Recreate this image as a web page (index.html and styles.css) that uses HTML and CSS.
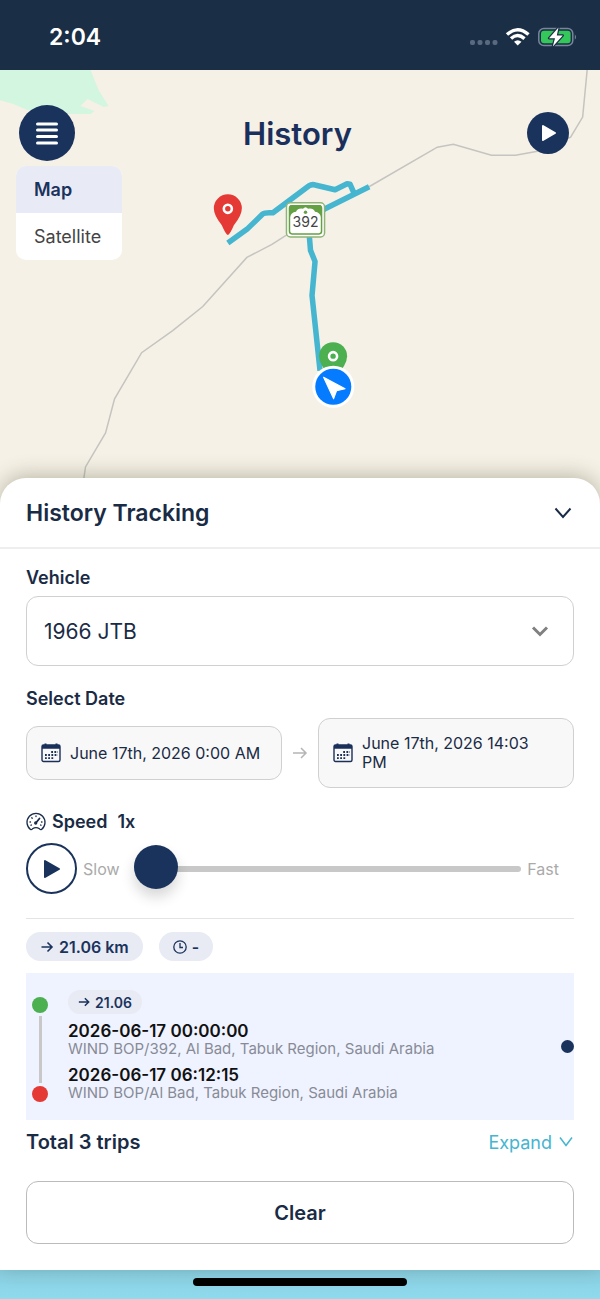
FILE: index.html
```html
<!DOCTYPE html>
<html lang="en">
<head>
<meta charset="utf-8">
<meta name="viewport" content="width=device-width, initial-scale=1">
<title>History</title>
<link rel="stylesheet" href="styles.css">
</head>
<body>
<div class="status">
  <span class="clock">2:04</span>
  <svg class="status-icons" width="108" height="22" viewBox="470 26 108 22" aria-hidden="true">
    <g fill="#596a80"><rect x="470" y="40" width="5" height="5" rx="2"/><rect x="477.500" y="40" width="5" height="5" rx="2"/><rect x="485" y="40" width="5" height="5" rx="2"/><rect x="492.500" y="40" width="5" height="5" rx="2"/></g>
    <g fill="none" stroke="#fff" stroke-width="3.400"><path d="M507 34.600Q517.500 24.800 528.500 34.600"/><path d="M511 38.600Q517.500 32.600 524.500 38.600"/></g>
    <path d="M514 41.800Q517.700 38.800 521.500 41.800L517.700 45.600Z" fill="#fff"/>
    <rect x="538.800" y="28.500" width="34" height="17" rx="5" fill="none" stroke="#77869a" stroke-width="1.500"/>
    <rect x="541" y="30.700" width="29.600" height="12.600" rx="3" fill="#34c759"/>
    <path d="M574.800 34.200q2.400 2.800 0 5.600z" fill="#77869a"/>
    <path d="M558.500 27.500L549 38.200H555L552.800 46.500L562.800 35.500H556.800Z" fill="#fff" stroke="#1a2e45" stroke-width="2.400" paint-order="stroke" stroke-linejoin="round"/>
  </svg>
</div>

<main class="screen">
  <section class="map" aria-label="Route map">
    <svg class="map-canvas" viewBox="0 70 600 433" preserveAspectRatio="xMidYMin slice" role="img" aria-label="Trip route near road 392">
      <path d="M0 70H91L99 90L109 106L104 107L88 99L81 106L95 111L91 114H72L28 110L14 104L0 100Z" fill="#d3f6e0"/>
      <path d="M586.500 70L582 117L570 137L537 151L515 155H491L453 144L437 147L368 187L325 208L300 226L272 244L247 257L203 306L173 330L142 352L115 398L106 432L86 466L84 480" fill="none" stroke="#c5c4c0" stroke-width="1.500"/>
      <g fill="none" stroke="#45b5d0" stroke-width="5.500" stroke-linejoin="round">
        <path d="M228 242.500L247 229L263 213.500Q265 212 273 212.500L309 185.500Q312 183.500 316 185L335 189.500L347 183.500L350 184L354 193"/>
        <path d="M369 186.500L325 208.500L308 220L310.500 250L315 261L312 295L320 370"/>
      </g>
      <rect x="286.500" y="202.500" width="38" height="34" rx="4" fill="#fff" stroke="#8fb477" stroke-width="1.500"/>
      <rect x="289.500" y="205.500" width="32" height="28" rx="2.500" fill="#fff" stroke="#66a044" stroke-width="1.500"/>
      <path d="M290 205H321V217Q320 212 315 211.500Q313 207.500 308 208.500Q305.500 205.500 303 208.500Q298 207.500 296 211.500Q291 212 290 217Z" fill="#66a044"/>
      <circle cx="305.500" cy="212" r="1.700" fill="#66a044"/>
      <text class="road-number" x="305.500" y="227" text-anchor="middle">392</text>
      <path d="M228 234.500Q226 234.500 222 225Q214 215 214 208A14 14 0 0 1 242 208Q242 215 234 225Q230 234.500 228 234.500Z" fill="#e53935"/>
      <circle cx="228" cy="208.500" r="4" fill="none" stroke="#fff" stroke-width="2.600"/>
      <path d="M333 382L322 365Q319 360 319 355.500A14 14 0 0 1 347 355.500Q347 360 344 365Z" fill="#4caf50"/>
      <circle cx="333" cy="355.500" r="4" fill="none" stroke="#fff" stroke-width="2.600"/>
      <circle cx="333.200" cy="386" r="21" fill="#fff"/>
      <circle cx="333.200" cy="386" r="18" fill="#057bff"/>
      <path d="M323.500 376.500L345 388L336.500 390L333.500 398Z" fill="#fff" stroke="#fff" stroke-width="1" stroke-linejoin="round"/>
    </svg>
    <header class="map-bar">
      <button class="round menu" type="button" aria-label="Menu">
        <svg width="24" height="24" viewBox="0 0 24 24" stroke="#fff" stroke-width="3" stroke-linecap="round"><path d="M2.500 3H21.500M2.500 9H21.500M2.500 15.500H21.500M2.500 22H21.500"/></svg>
      </button>
      <h1>History</h1>
      <button class="round play-map" type="button" aria-label="Play">
        <svg width="16" height="18" viewBox="0 0 16 18"><path d="M2 2L14 9L2 16Z" fill="#fff" stroke="#fff" stroke-width="2" stroke-linejoin="round"/></svg>
      </button>
    </header>
    <div class="map-types">
      <button class="type active" type="button">Map</button>
      <button class="type" type="button">Satellite</button>
    </div>
  </section>

  <section class="sheet">
    <header class="sheet-head">
      <h2>History Tracking</h2>
      <button class="plain" type="button" aria-label="Collapse">
        <svg width="22" height="22" viewBox="0 0 22 22" fill="none" stroke="#1a2b4a" stroke-width="2"><path d="M3.500 6.500L11 15L18.500 6.500"/></svg>
      </button>
    </header>
    <div class="sheet-body">
      <label class="label" for="vehicle">Vehicle</label>
      <div class="select-wrap">
        <select id="vehicle"><option>1966 JTB</option></select>
        <svg width="20" height="20" viewBox="0 0 20 20" fill="none" stroke="#808080" stroke-width="3" aria-hidden="true"><path d="M3 6.500L10 13.500L17 6.500"/></svg>
      </div>

      <h3 class="label date-label">Select Date</h3>
      <div class="dates">
        <button class="date" type="button">
          <svg class="calendar" width="20" height="20" viewBox="0 0 20 20"><rect x="1" y="2" width="18" height="16.500" rx="1.500" fill="none" stroke="#1a2f5a" stroke-width="1.400"/><path d="M1 2H19V5.800H1ZM3.500 .500H5.500V3H3.500ZM14.500 .500H16.500V3H14.500Z" fill="#1a2f5a"/><path d="M10.200 9H17M4 12H17M4 15.200H13.500" stroke="#1a2f5a" stroke-width="1.800" stroke-dasharray="1.800 1.400"/></svg>
          <span>June 17th, 2026 0:00 AM</span>
        </button>
        <svg width="16" height="14" viewBox="0 0 16 14" fill="none" stroke="#b5b5b5" stroke-width="1.500" aria-hidden="true"><path d="M1 7H14M9 2L14 7L9 12"/></svg>
        <button class="date" type="button">
          <svg class="calendar" width="20" height="20" viewBox="0 0 20 20"><rect x="1" y="2" width="18" height="16.500" rx="1.500" fill="none" stroke="#1a2f5a" stroke-width="1.400"/><path d="M1 2H19V5.800H1ZM3.500 .500H5.500V3H3.500ZM14.500 .500H16.500V3H14.500Z" fill="#1a2f5a"/><path d="M10.200 9H17M4 12H17M4 15.200H13.500" stroke="#1a2f5a" stroke-width="1.800" stroke-dasharray="1.800 1.400"/></svg>
          <span>June 17th, 2026 14:03 PM</span>
        </button>
      </div>

      <div class="speed-title">
        <svg width="20" height="20" viewBox="0 0 20 20" fill="none" stroke="#1a2b4a" stroke-width="1.300" stroke-linecap="round" aria-hidden="true"><path d="M4.500 17.500A9 9 0 1 1 15.500 17.500Q14.500 18 13.500 16.800Q10 14.500 6.500 16.800Q5.500 18 4.500 17.500Z"/><path d="M9.800 11L13.500 6.500" stroke-width="1.800"/><path d="M10 4V4.500M5.800 5.800L6.200 6.200M4 10H4.500M15.500 10H16M5 13.300L5.300 13M15 13.300L14.700 13"/><circle cx="9.700" cy="11" r="1"/></svg>
        <label for="speed">Speed</label>
        <output for="speed">1x</output>
      </div>
      <div class="speed-row">
        <button class="play-track" type="button" aria-label="Play trip">
          <svg width="18" height="20" viewBox="0 0 18 20"><path d="M2 2L16 10L2 18Z" fill="#1a335c" stroke="#1a335c" stroke-width="2" stroke-linejoin="round"/></svg>
        </button>
        <span>Slow</span>
        <input id="speed" type="range" min="1" max="10" value="1">
        <span>Fast</span>
      </div>

      <div class="totals">
        <span class="pill"><svg width="14" height="14" viewBox="0 0 14 14" fill="none" stroke="#1a335c" stroke-width="1.600"><path d="M1.500 7H12M7.500 2.500L12 7L7.500 11.500"/></svg>21.06 km</span>
        <span class="pill"><svg width="14" height="14" viewBox="0 0 14 14" fill="none" stroke="#1a335c" stroke-width="1.300"><circle cx="7" cy="7" r="6.200"/><path d="M7 3V7.500H10"/></svg>-</span>
      </div>

      <article class="trip">
        <div class="rail"><i class="dot start"></i><i class="line"></i><i class="dot end"></i></div>
        <div class="trip-info">
          <span class="pill small"><svg width="12" height="12" viewBox="0 0 14 14" fill="none" stroke="#1a335c" stroke-width="1.700"><path d="M1 7H12.500M8 2.500L12.500 7L8 11.500"/></svg>21.06</span>
          <div class="stop"><time datetime="2026-06-17T00:00:00">2026-06-17 00:00:00</time><p>WIND BOP/392, Al Bad, Tabuk Region, Saudi Arabia</p></div>
          <div class="stop"><time datetime="2026-06-17T06:12:15">2026-06-17 06:12:15</time><p>WIND BOP/Al Bad, Tabuk Region, Saudi Arabia</p></div>
        </div>
        <i class="marker"></i>
      </article>

      <div class="summary">
        <strong>Total 3 trips</strong>
        <button class="plain expand" type="button">Expand
          <svg width="16" height="16" viewBox="0 0 16 16" fill="none" stroke="#45b5d0" stroke-width="1.500"><path d="M2 3.500L8 11.500L14 3.500"/></svg>
        </button>
      </div>
      <button class="clear" type="button">Clear</button>
    </div>
  </section>
</main>
<footer class="home"><i class="home-bar"></i></footer>
</body>
</html>
```

FILE: styles.css
```css
* { box-sizing: border-box; }
body {
  margin: 0;
  min-height: 100vh;
  display: flex;
  flex-direction: column;
  font-family: Inter, "Liberation Sans", sans-serif;
  font-size: 16px;
  color: #1a2b45;
  background: #fff;
}
h1, h2, h3, p { margin: 0; }
button, select { font: inherit; color: inherit; cursor: pointer; }
button { padding: 0; border: 0; background: none; }
svg { display: block; flex: none; }

.status {
  height: 70px;
  padding: 4px 22px 0 49px;
  display: flex;
  align-items: center;
  justify-content: space-between;
  background: #1a2e45;
  color: #fff;
}
.clock { font-size: 23px; font-weight: 600; }

.screen { flex: 1; display: flex; flex-direction: column; }
.map {
  position: relative;
  flex: 1;
  min-height: 433px;
  background: #f5f1e6;
}
.map-canvas { position: absolute; inset: 0; width: 100%; height: 100%; }
.road-number { font-size: 14px; fill: #444; }
.map-bar {
  position: relative;
  display: grid;
  grid-template-columns: 1fr auto 1fr;
  align-items: center;
  padding: 35px 24px 0 19px;
}
.map-bar h1 { font-size: 31px; font-weight: 600; color: #1a2f5c; }
.round {
  display: grid;
  place-items: center;
  border-radius: 50%;
  background: #1a335c;
}
.menu { width: 56px; height: 56px; }
.play-map { width: 42px; height: 42px; justify-self: end; margin-right: 7px; padding-left: 2px; }
.map-types {
  position: relative;
  display: inline-flex;
  flex-direction: column;
  min-width: 106px;
  margin: 5px 0 0 16px;
  border-radius: 10px;
  overflow: hidden;
  background: #fff;
}
.type { height: 47px; padding: 0 18px; text-align: left; font-size: 18px; color: #444; }
.type.active { background: #e8eaf6; color: #1a335c; font-weight: 600; }

.sheet {
  position: relative;
  margin-top: -26px;
  border-radius: 26px 26px 0 0;
  background: #fff;
  box-shadow: 0 -3px 20px rgba(60, 60, 30, .3);
}
.sheet-head {
  display: flex;
  align-items: center;
  justify-content: space-between;
  height: 71px;
  padding: 0 26px;
  border-bottom: 2px solid #eee;
}
.sheet-head h2 { font-size: 23px; font-weight: 600; }
.sheet-body { padding: 17px 26px 26px; }
.label { display: block; font-size: 18px; line-height: 24px; font-weight: 600; }
.select-wrap { display: grid; align-items: center; margin-top: 6px; }
.select-wrap > * { grid-area: 1 / 1; }
.select-wrap svg { justify-self: end; margin-right: 24px; pointer-events: none; }
select {
  appearance: none;
  width: 100%;
  height: 70px;
  padding: 0 48px 0 17px;
  border: 1px solid #d0d0d0;
  border-radius: 12px;
  background: #fff;
  font-size: 21px;
}
.date-label { margin-top: 21px; }
.dates {
  display: grid;
  grid-template-columns: 1fr 36px 1fr;
  align-items: center;
  justify-items: center;
  margin-top: 7px;
}
.date {
  display: flex;
  align-items: center;
  gap: 9px;
  width: 100%;
  min-height: 54px;
  padding: 15px 20px 15px 14px;
  border: 1px solid #d0d0d0;
  border-radius: 12px;
  background: #f8f8f8;
  font-size: 16px;
  line-height: 19px;
  text-align: left;
}

.speed-title {
  display: flex;
  align-items: center;
  gap: 6px;
  margin-top: 22px;
  font-size: 18px;
  line-height: 24px;
  font-weight: 600;
}
.speed-title output { margin-left: 4px; }
.speed-row {
  display: flex;
  align-items: center;
  gap: 6px;
  margin-top: 9px;
  padding-right: 15px;
  color: #aaa;
}
.play-track {
  display: grid;
  place-items: center;
  width: 51px;
  height: 51px;
  border: 2px solid #1a335c;
  border-radius: 50%;
}
#speed {
  flex: 1;
  min-width: 0;
  height: 44px;
  margin: 0 0 0 8px;
  appearance: none;
  background: none;
}
#speed::-webkit-slider-runnable-track { height: 6px; border-radius: 3px; background: #c8c8c8; }
#speed::-webkit-slider-thumb {
  appearance: none;
  width: 44px;
  height: 44px;
  margin-top: -21px;
  border-radius: 50%;
  background: #1a335c;
  box-shadow: 0 8px 14px rgba(0, 0, 0, .16);
}

.totals {
  display: flex;
  gap: 16px;
  margin-top: 24px;
  padding: 13px 0 12px;
  border-top: 1px solid #e4e4e4;
}
.pill {
  display: inline-flex;
  align-items: center;
  gap: 5px;
  height: 29px;
  padding: 0 14px;
  border-radius: 15px;
  background: #e8eaf4;
  color: #1a335c;
  font-weight: 600;
}
.pill:not(.small) { font-size: 16px; }
.pill.small { height: 24px; padding: 0 10px; font-size: 14px; }

.trip {
  display: flex;
  align-items: center;
  padding: 17px 0 18px 6px;
  background: #eff3ff;
}
.rail {
  align-self: stretch;
  display: flex;
  flex-direction: column;
  align-items: center;
  gap: 3px;
  width: 16px;
  margin: 7px 20px 0 0;
}
.dot { flex: none; width: 16px; height: 16px; border-radius: 50%; }
.start { background: #4caf50; }
.end { background: #e53935; }
.line { flex: 1; width: 3px; background: #c8c8c8; }
.trip-info { flex: 1; display: flex; flex-direction: column; align-items: flex-start; gap: 8px; }
.stop time { display: block; font-size: 17px; line-height: 18px; font-weight: 600; color: #111; }
.stop p { font-size: 15px; line-height: 18px; color: #888b96; }
.marker { flex: none; width: 13px; height: 13px; border-radius: 50%; background: #1a335c; }

.summary {
  display: flex;
  align-items: center;
  justify-content: space-between;
  height: 44px;
  font-size: 20px;
}
.summary strong { font-weight: 600; }
.expand { display: flex; align-items: center; gap: 6px; font-size: 18px; color: #45b5d0; }
.clear {
  display: block;
  width: 100%;
  height: 63px;
  margin-top: 17px;
  border: 1px solid #bbb;
  border-radius: 12px;
  font-size: 20px;
  font-weight: 600;
}

.home {
  display: flex;
  justify-content: center;
  height: 29px;
  padding-top: 8px;
  background: linear-gradient(#89cfe2, #90daed);
}
.home-bar { width: 214px; height: 8px; border-radius: 4px; background: #000; }
```
